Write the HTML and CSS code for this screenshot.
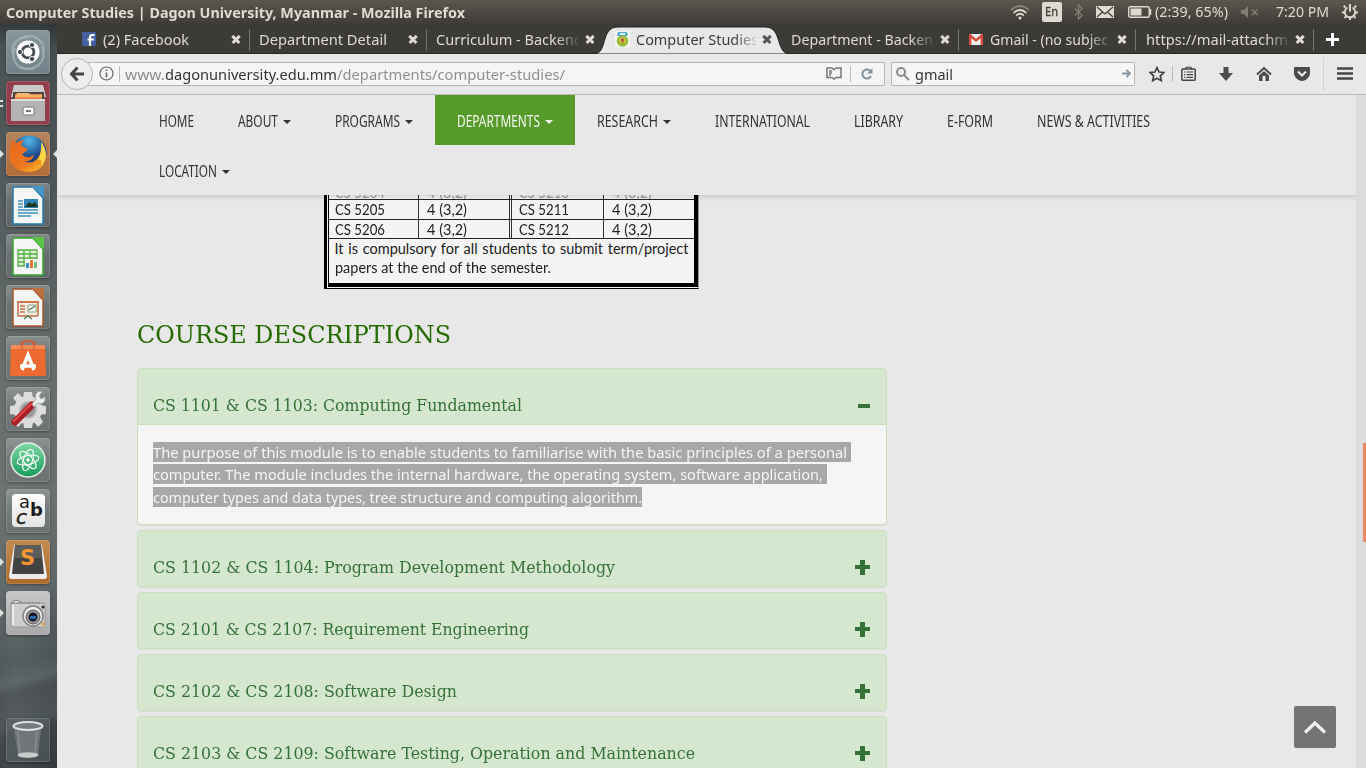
FILE: index.html
```html
<!DOCTYPE html>
<html lang="en">
<head>
<meta charset="utf-8">
<title>Computer Studies | Dagon University, Myanmar</title>
<link rel="stylesheet" href="styles.css">
</head>
<body>
<header class="panel">
  <span class="panel-title" data-w="459">Computer Studies | Dagon University, Myanmar - Mozilla Firefox</span>
  <div class="status">
    <svg class="st-wifi" width="20" height="16" viewBox="0 0 20 16" fill="none" stroke-width="1.7"><path d="M1 6Q10-2 19 6" stroke="#85817a"/><path d="M3.5 9Q10 3 16.500 9M6.200 11.500Q10 8 13.800 11.500" stroke="#dfdbd2"/><circle cx="10" cy="14" r="1.500" fill="#dfdbd2"/></svg>
    <span class="lang"><span data-w="13">En</span></span>
    <svg class="st-bt" width="9" height="16" viewBox="0 0 9 16" fill="none" stroke="#817d75" stroke-width="1.300"><path d="M1 4.500L8 11.500L4.500 15V1L8 4.500L1 11.500"/></svg>
    <svg class="st-mail" width="18" height="12" viewBox="0 0 18 12"><rect width="18" height="12" fill="#dfdbd2"/><path d="M1 1L9 8L17 1M1 11L6.500 6M17 11L11.500 6" fill="none" stroke="#45423c" stroke-width="1.300"/></svg>
    <svg class="st-batt" width="24" height="12" viewBox="0 0 24 12"><rect x=".7" y=".7" width="20.500" height="10.600" rx="1.500" fill="none" stroke="#dfdbd2" stroke-width="1.400"/><rect x="2.500" y="2.500" width="11" height="7" fill="#dfdbd2"/><path d="M22.500 3v6" stroke="#dfdbd2" stroke-width="1.500"/></svg>
    <span class="st-time" data-w="73">(2:39, 65%)</span>
    <svg class="st-mute" width="18" height="12" viewBox="0 0 18 12"><path d="M0 4H3L7 0V12L3 8H0Z" fill="#817d75"/><path d="M11 3.500L16.500 9M16.500 3.500L11 9" stroke="#817d75" stroke-width="1.500"/></svg>
    <span class="st-clock" data-w="53">7:20 PM</span>
    <svg class="st-gear" width="16" height="16" viewBox="0 0 16 16" fill="none" stroke="#dfdbd2"><path d="M5.500 3.500A5.200 5.200 0 1 0 10.500 3.500" stroke-width="1.800"/><path d="M8 0V7.500" stroke-width="2"/><path d="M3.500 3.500L1.800 1.800M12.500 3.500L14.200 1.800M2.500 8.500H0M13.500 8.500H16M4 12.500L2.500 14M12 12.500L13.500 14M8 13.500V16" stroke-width="2"/></svg>
  </div>
</header>
<div class="desktop">
<nav class="launcher">
  <div class="tile dash"><svg viewBox="0 0 44 44"><g fill="none" stroke="#bdc7cb" stroke-width="2" opacity=".55"><path d="M8 27C2 13 16 3 29 7M15 9C29 1 41 13 37 25M36 17C42 32 28 43 14 37M29 38C14 43 3 31 9 18"/></g><circle cx="22" cy="22" r="11.500" fill="#fafafa"/><circle cx="22" cy="22" r="5.900" fill="none" stroke="#454c52" stroke-width="2.800"/><g fill="#454c52" stroke="#fafafa"><circle cx="14" cy="22" r="2.600"/><circle cx="26" cy="15" r="2.600"/><circle cx="26" cy="29" r="2.600"/></g></svg></div>
  <div class="tile files"><span class="pip two"></span><svg viewBox="0 0 44 44"><path d="M8 4H37L40 16H5Z" fill="#c9c9c9"/><path d="M7 11H38V19H7Z" fill="#4d443f"/><path d="M9 13H36V19H9Z" fill="#e58b48"/><path d="M11 12H23L25 14H36V16H9Z" fill="#f4b46e"/><path d="M5 18H39V40H5Z" fill="#b4b4b4"/><path d="M5 18H39V20H5Z" fill="#ddd"/><rect x="17" y="26" width="11" height="8" rx="1" fill="#f7f7f7" stroke="#777"/><rect x="20" y="29" width="5" height="2" fill="#777"/></svg></div>
  <div class="tile fox"><span class="pip"></span><span class="pip right"></span><svg viewBox="0 0 44 44"><defs><radialGradient id="globe" cx=".5" cy=".15"><stop stop-color="#52b9eb"/><stop offset="1" stop-color="#173f81"/></radialGradient><linearGradient id="fur" x2=".8" y2="1"><stop stop-color="#e66a1f"/><stop offset=".65" stop-color="#ed751e"/><stop offset="1" stop-color="#f8b928"/></linearGradient></defs><circle cx="23" cy="21" r="17.500" fill="url(#globe)"/><path d="M7 8L10 11Q14 8 18 8Q15 11 15.500 14L22 17Q20 20 16 22Q19 26 24 25L28 23Q26 30 19 29Q25 33 31 27Q35 22 35 17Q41 18 40 25C38 45 6 45 4 25Q3 15 7 8Z" fill="url(#fur)"/><path d="M35 10C42 18 41 28 35 34Q37 26 32 28Q36 20 35 10Z" fill="#fbd74a"/></svg></div>
  <div class="tile"><svg viewBox="0 0 44 44"><path d="M7 4H27L37 15V41H7Z" fill="#f6f6f6" stroke="#237bab" stroke-width="1.500"/><path d="M26 3H38V15Z" fill="#4797c6"/><rect x="18" y="16" width="14" height="9" fill="#2e87b6"/><path d="M19 24L23 19L26 21L29 19L32 24Z" fill="#23391f"/><path d="M12 18H17M12 21H17M12 24H17M12 27H32M12 30H32M12 33H25" stroke="#4191bf" stroke-width="1.500"/></svg></div>
  <div class="tile"><svg viewBox="0 0 44 44"><path d="M7 4H27L37 15V41H7Z" fill="#f6f6f6" stroke="#35a72e" stroke-width="1.500"/><path d="M26 3H38V15Z" fill="#5bc447"/><path d="M12 16H31V32H12ZM12 20H31M12 24H31M12 28H31M18 16V32M24 16V32" fill="#e4f2dd" stroke="#52ae40" stroke-width="1.300"/><rect x="19" y="25" width="13" height="9" fill="#f9f9f9"/><path d="M20 29h3v5h-3Z" fill="#3d8ebd"/><path d="M24 26h3v8h-3Z" fill="#df793c"/><path d="M28 28h3v6h-3Z" fill="#7aba75"/></svg></div>
  <div class="tile"><svg viewBox="0 0 44 44"><path d="M7 4H27L37 15V41H7Z" fill="#f6f6f6" stroke="#a5572b" stroke-width="1.500"/><path d="M26 3H38V15Z" fill="#bd6f42"/><rect x="12" y="17" width="20" height="14" rx="1" fill="#f7eee8" stroke="#c26b3e" stroke-width="1.500"/><path d="M11 17H33M14 21H19M14 24H19M14 27H19" stroke="#cc7045" stroke-width="1.700"/><path d="M22 20H30V27H22Z" fill="#fff" stroke="#81a172"/><path d="M23 25L26 23L29 21M18 34L22 31L26 34" fill="none" stroke="#4b7449" stroke-width="1.300"/></svg></div>
  <div class="tile"><svg viewBox="0 0 44 44"><path d="M15 14V8Q15 5 22 5Q29 5 29 8V14" fill="none" stroke="#c5583d" stroke-width="2"/><path d="M5 9H39L40 40H4Z" fill="#ed6a31"/><path d="M5 9H39V13H5Z" fill="#f28a59"/><path d="M16 14V9Q16 5 22 5Q28 5 28 9V14" fill="none" stroke="#d4603c" stroke-width="1.500"/><path d="M16 34L22 19L28 34M14 30H30" fill="none" stroke="#fff" stroke-width="3.500"/></svg></div>
  <div class="tile"><svg viewBox="0 0 44 44"><g fill="#dcdcdc"><circle cx="22" cy="23" r="14"/><path d="M18 5H26L27 12H17ZM18 41H26L27 34H17ZM4 19V27L11 28V18ZM40 19V27L33 28V18ZM7 11L12 6L18 12L12 17ZM37 35L32 40L27 34L33 28ZM7 35L12 40L18 34L12 28Z"/></g><circle cx="22" cy="23" r="8" fill="#939896" stroke="#bababa" stroke-width="2"/><path d="M9 35L26 18" stroke="#a92024" stroke-width="7" stroke-linecap="round"/><path d="M8 34L25 17" stroke="#e4484a" stroke-width="2" stroke-linecap="round"/><path d="M26 17L30 12C28 7 32 3 36 5L33 9L35 12L39 10C40 15 36 18 32 16L28 20Z" fill="#eee" stroke="#a8a8a8"/></svg></div>
  <div class="tile"><svg viewBox="0 0 44 44"><defs><linearGradient id="atom" x2="0" y2="1"><stop stop-color="#7fd9a4"/><stop offset="1" stop-color="#159b5b"/></linearGradient></defs><circle cx="22" cy="22" r="17" fill="url(#atom)" stroke="#e8eee9" stroke-width="1.500"/><g fill="none" stroke="#f3fff7" stroke-width="1.200"><ellipse cx="22" cy="22" rx="11" ry="4.500" transform="rotate(-12 22 22)"/><ellipse cx="22" cy="22" rx="11" ry="4.500" transform="rotate(48 22 22)"/><ellipse cx="22" cy="22" rx="11" ry="4.500" transform="rotate(108 22 22)"/></g><circle cx="22" cy="22" r="1.700" fill="#fff"/></svg></div>
  <div class="tile"><div class="letters"><span class="la">a</span><span class="lb">b</span><span class="lc">c</span></div></div>
  <div class="tile sublime"><span class="pip"></span><svg viewBox="0 0 44 44"><path d="M8 5H36L41 36Q41 39 38 39H6Q3 39 3 36Z" fill="#ececec"/><path d="M9 5H35L38 34H6Z" fill="#434343"/><path d="M9 5H35L36 18H8Z" fill="#5c5c5c"/></svg><span class="ls">S</span></div>
  <div class="tile camera"><span class="pip"></span><svg viewBox="0 0 44 44"><rect x="5" y="12" width="34" height="24" rx="2" fill="#cfcfcf" stroke="#969696"/><path d="M5 12Q10 7 16 12Z" fill="#f5f5f5" stroke="#777"/><path d="M17 12H34" stroke="#777" stroke-dasharray="2 1"/><path d="M7 14V34" stroke="#eee" stroke-width="2"/><circle cx="27" cy="25" r="10" fill="#eee" stroke="#818181" stroke-width="1.500"/><circle cx="27" cy="26" r="7" fill="#9a9a9a" stroke="#555"/><circle cx="27" cy="26" r="4.500" fill="#151b2a"/><path d="M24 25H30V28H24Z" fill="#2c67a5"/><circle cx="37" cy="16" r="1.500" fill="#222"/><circle cx="37" cy="33" r="1.500" fill="#f49c21"/></svg></div>
  <div class="tile trash"><svg viewBox="0 0 44 44"><path d="M8 10H35L32 38Q22 42 12 38Z" fill="#7b8083" opacity=".75"/><path d="M12 13L14 36M31 13L29 36" stroke="#acb1b3" opacity=".6"/><ellipse cx="22" cy="8" rx="14.500" ry="4" fill="#777c7e" stroke="#dedfdd" stroke-width="2"/><ellipse cx="22" cy="37" rx="10.500" ry="2.700" fill="#c8cbca"/></svg></div>
</nav>
<main class="window">
  <div class="tabs">
    <div class="tab t1"><svg width="14" height="14" viewBox="0 0 14 14"><rect width="14" height="14" rx="1" fill="#4460a0"/><path d="M8 14V5.500Q8 3 10.500 3H12.500M5.500 7.500H12" fill="none" stroke="#fff" stroke-width="2.200"/></svg><span class="name"><span data-w="86">(2) Facebook</span></span><i class="x"></i></div>
    <div class="tab"><span class="name"><span data-w="128">Department Detail</span></span><i class="x"></i></div>
    <div class="tab last"><span class="name fade"><span data-w="147">Curriculum - Backend</span></span><i class="x"></i></div>
    <div class="tab active"><svg class="shape" width="196" height="29" viewBox="0 0 196 29"><path d="M0 29C14 29 6 2 24 2H171C189 2 181 29 196 29Z" transform="translate(0 -1)" fill="#e8e8e8" stroke="#24231f" stroke-width="1"/><path d="M0 28H196V29H0Z" fill="#e8e8e8"/></svg><svg width="15" height="16" viewBox="0 0 15 16"><rect width="15" height="16" fill="#f5f5ef"/><path d="M3 1H12L13 5H2Z" fill="#55a9c9"/><path d="M5 2H10V4H5Z" fill="#d8eef2"/><ellipse cx="7.500" cy="10" rx="5.800" ry="5.600" fill="#91be36"/><circle cx="7.500" cy="9.500" r="3.200" fill="#d7bd4f"/><path d="M7.500 7.500V12.500M6 9H9" stroke="#a45032" stroke-width="1.500"/></svg><span class="name fade"><span data-w="122">Computer Studies</span></span><i class="x"></i></div>
    <div class="tab"><span class="name fade"><span data-w="142">Department - Backen</span></span><i class="x"></i></div>
    <div class="tab gm"><svg width="14" height="11" viewBox="0 0 14 11"><rect width="14" height="11" rx="1" fill="#eee"/><path d="M1.200 11V1.500L7 6.500L12.800 1.500V11" fill="none" stroke="#d94b3d" stroke-width="2.400"/></svg><span class="name fade"><span data-w="118">Gmail - (no subjec</span></span><i class="x"></i></div>
    <div class="tab t7"><span class="name fade"><span data-w="142">https://mail-attachm</span></span><i class="x"></i></div>
    <i class="plus-tab"></i>
  </div>
  <div class="toolbar">
    <div class="back"><svg width="16" height="16" viewBox="0 0 16 16" fill="none" stroke="#454545" stroke-width="3"><path d="M8.500 1.500L2.500 8L8.500 14.500M3 8H15"/></svg></div>
    <div class="url">
      <svg width="15" height="15" viewBox="0 0 15 15"><circle cx="7.500" cy="7.500" r="6.500" fill="none" stroke="#666" stroke-width="1.200"/><path d="M7.500 3.500V5M7.500 6.500V11.500" stroke="#666" stroke-width="1.600"/></svg>
      <i class="vr"></i>
      <span class="address"><span data-w="40">www.</span><b data-w="172">dagonuniversity.edu.mm</b><span data-w="228">/departments/computer-studies/</span></span>
      <svg class="reader" width="16" height="13" viewBox="0 0 16 13" fill="none" stroke="#777" stroke-width="1.500"><path d="M1 1H6L8 2.500L10 1H15V10.500H10L8 12L6 10.500H1ZM3 4H6M3 6H6M3 8H5"/></svg>
      <i class="vr"></i>
      <svg class="reload" width="12" height="12" viewBox="0 0 12 12"><path d="M10 8A4.500 4.500 0 1 1 9 2.800" fill="none" stroke="#84919d" stroke-width="2"/><path d="M11.500 0V5.500H6Z" fill="#84919d"/></svg>
    </div>
    <div class="search"><svg width="14" height="14" viewBox="0 0 14 14" fill="none" stroke="#8a8a8a" stroke-width="2"><circle cx="5" cy="5" r="4"/><path d="M8 8L13 13"/></svg><span data-w="38">gmail</span><svg class="go" width="9" height="9" viewBox="0 0 9 9" fill="none" stroke="#8796a5" stroke-width="1.800"><path d="M0 4.500H8M4.500 1L8 4.500L4.500 8"/></svg></div>
    <div class="tools">
      <svg width="16" height="16" viewBox="0 0 16 16"><path d="M8 1.500L10 6L15 6.500L11.300 9.900L12.300 14.700L8 12.200L3.700 14.700L4.700 9.900L1 6.500L6 6Z" fill="none" stroke="#454545" stroke-width="1.700"/></svg><i class="vr"></i>
      <svg class="list" width="15" height="15" viewBox="0 0 15 15" fill="none" stroke="#454545" stroke-width="1.500"><rect x=".8" y="3" width="13.400" height="11.200" rx="1"/><path d="M4 3Q4.500 1 7.500 1Q10.500 1 11 3M5.500 6H12M5.500 8.700H12M5.500 11.400H12M3 6H4.300M3 8.700H4.300M3 11.400H4.300" stroke-width="1.200"/></svg>
      <svg class="down" width="14" height="14" viewBox="0 0 14 14"><path d="M4.500 0H9.500V6H14L7 14L0 6H4.500Z" fill="#4b4b4b"/></svg>
      <svg class="home" width="16" height="15" viewBox="0 0 16 15"><path d="M1 8.500L8 2L15 8.500" fill="none" stroke="#4b4b4b" stroke-width="2"/><path d="M3 9.500L8 5L13 9.500V15H9.500V10H6.500V15H3Z" fill="#4b4b4b"/></svg>
      <svg class="pocket" width="16" height="14" viewBox="0 0 16 14"><path d="M1 0H15Q16 0 16 1V6C16 10 12 14 8 14C4 14 0 10 0 6V1Q0 0 1 0Z" fill="#4b4b4b"/><path d="M4 4.500L8 8.500L12 4.500" fill="none" stroke="#eee" stroke-width="2"/></svg>
      <i class="vr tall"></i>
      <svg class="menu" width="16" height="13" viewBox="0 0 16 13"><path d="M0 1.500H16M0 6.500H16M0 11.500H16" stroke="#454545" stroke-width="2.600"/></svg>
    </div>
  </div>
  <div class="page">
    <ul class="site-nav">
      <li><span data-w="35">HOME</span></li>
      <li><span data-w="40">ABOUT</span><i class="caret"></i></li>
      <li><span data-w="65">PROGRAMS</span><i class="caret"></i></li>
      <li class="current"><span data-w="83">DEPARTMENTS</span><i class="caret"></i></li>
      <li><span data-w="61">RESEARCH</span><i class="caret"></i></li>
      <li><span data-w="95">INTERNATIONAL</span></li>
      <li><span data-w="49">LIBRARY</span></li>
      <li><span data-w="46">E-FORM</span></li>
      <li><span data-w="113">NEWS &amp; ACTIVITIES</span></li>
      <li><span data-w="58">LOCATION</span><i class="caret"></i></li>
    </ul>
    <div class="content">
      <div class="sheet"><div class="sheet-in">
        <div class="row cut"><span><b data-w="50">CS 5204</b></span><span><b data-w="40">4 (3,2)</b></span><span><b data-w="50">CS 5210</b></span><span><b data-w="40">4 (3,2)</b></span></div>
        <div class="row"><span><b data-w="50">CS 5205</b></span><span><b data-w="40">4 (3,2)</b></span><span><b data-w="50">CS 5211</b></span><span><b data-w="40">4 (3,2)</b></span></div>
        <div class="row"><span><b data-w="50">CS 5206</b></span><span><b data-w="40">4 (3,2)</b></span><span><b data-w="50">CS 5212</b></span><span><b data-w="40">4 (3,2)</b></span></div>
        <div class="note"><div class="wide">It is compulsory for all students to submit term/project</div><div><b data-w="216">papers at the end of the semester.</b></div></div>
      </div></div>
      <h2><span data-w="314">COURSE DESCRIPTIONS</span></h2>
      <div class="accordion">
        <section><h4><span data-w="369">CS 1101 &amp; CS 1103: Computing Fundamental</span><i class="minus"></i></h4>
          <div class="body"><p><mark><span data-w="694">The purpose of this module is to enable students to familiarise with the basic principles of a personal</span></mark></p><p><mark><span data-w="670">computer. The module includes the internal hardware, the operating system, software application,</span></mark></p><p><mark class="end"><span data-w="489">computer types and data types, tree structure and computing algorithm.</span></mark></p></div></section>
        <section><h4><span data-w="462">CS 1102 &amp; CS 1104: Program Development Methodology</span><i class="plus"></i></h4></section>
        <section><h4><span data-w="376">CS 2101 &amp; CS 2107: Requirement Engineering</span><i class="plus"></i></h4></section>
        <section><h4><span data-w="304">CS 2102 &amp; CS 2108: Software Design</span><i class="plus"></i></h4></section>
        <section><h4><span data-w="542">CS 2103 &amp; CS 2109: Software Testing, Operation and Maintenance</span><i class="plus"></i></h4></section>
      </div>
    </div>
    <div class="scroll"><i></i></div>
    <div class="top-btn"><svg width="24" height="14" viewBox="0 0 24 14"><path d="M2 12.500L12 3L22 12.500" fill="none" stroke="#f1f1f1" stroke-width="3.200"/></svg></div>
  </div>
</main>
</div>
<script src="fit.js"></script>
</body>
</html>
```
FILE: styles.css
```css
* { box-sizing: border-box; }
body { margin: 0; width: 1366px; height: 768px; overflow: hidden; font: 14.5px "Noto Sans", sans-serif; background: #e8e8e8; }
svg { display: block; flex: none; }
[data-w] { display: inline-block; white-space: pre; transform-origin: 0 50%; flex: none; }
b { font-weight: 400; }

.panel { height: 24px; display: flex; align-items: center; padding: 0 8px 0 6px; background: linear-gradient(#5b574e, #3e3c38); color: #dfdbd2; line-height: 24px; }
.panel-title { font-weight: 700; font-size: 14.5px; }
.status { display: flex; align-items: center; height: 24px; margin-left: auto; font-size: 14.5px; }
.st-time, .st-clock { position: relative; top: -1px; }
.lang { width: 20px; height: 20px; margin: 0 12px; background: #dfdbd2; border-radius: 2px; color: #44413b; font-size: 12.5px; line-height: 20px; padding-left: 3px; -webkit-text-stroke: .3px #44413b; }
.st-mail { margin-left: 13px; }
.st-batt { margin: 0 3px 0 14px; }
.st-mute { margin: 0 17px 0 13px; }
.st-gear { margin-left: 13px; }

.desktop { display: flex; height: 744px; }
.launcher { width: 57px; display: flex; flex-direction: column; gap: 7px; padding: 6px 0 0 6px; background: radial-gradient(ellipse at 15px 640px, rgba(125,133,130,.35), transparent 65px), linear-gradient(165deg, transparent 620px, rgba(120,130,130,.3) 640px, transparent 650px, rgba(120,130,130,.2) 680px, transparent 690px), linear-gradient(#2d3335, #434b4e 24px, #4b5356 180px, #626967 350px, #666d6c 480px, #596164 560px, #42494d 640px, #272d33); }
.tile { position: relative; width: 44px; height: 44px; flex: none; border-radius: 4px; background: linear-gradient(rgba(190,196,196,.42), rgba(130,137,138,.38) 45%, rgba(110,115,115,.4)); box-shadow: inset 0 0 0 1px rgba(205,210,210,.22), 0 1px 3px rgba(0,0,0,.35); }
.tile svg { width: 44px; height: 44px; }
.dash { background: linear-gradient(#89969b, #71828a); }
.files { background: #933e4b; }
.fox { background: linear-gradient(#b6835e, #b36c37); }
.sublime { background: linear-gradient(#c18a4e, #ad6b27); }
.camera { background: linear-gradient(#c8c8c8, #a9a9a9); }
.trash { margin-top: 76px; background: rgba(110,118,122,.3); }
.pip { position: absolute; left: -6px; top: 18px; border: 4px solid transparent; border-left-color: #dedede; border-right: 0; }
.pip.right { left: 47px; border-left: 0; border-right: 4px solid #dedede; }
.pip.two { border: 0; width: 3px; height: 7px; top: 19px; border-top: 2px solid #ddd; border-bottom: 2px solid #ddd; }
.letters { position: absolute; left: 6px; top: 5px; width: 33px; height: 33px; border-radius: 4px; background: linear-gradient(#fff, #e3e3e3); color: #1c1c1c; font-family: "DejaVu Sans", sans-serif; }
.letters span { position: absolute; line-height: 16px; font-size: 18px; }
.letters .la { left: 7px; top: 0; }
.letters .lb { left: 18px; top: 8px; font-weight: 700; }
.letters .lc { left: 4px; top: 15px; font-style: italic; font-size: 20px; -webkit-text-stroke: .4px #1c1c1c; }
.ls { position: absolute; left: 14px; top: 4px; font: 700 21px/28px "DejaVu Sans", sans-serif; color: #f59431; }

.window { flex: 1; min-width: 0; }
.tabs { height: 30px; display: flex; background: #3c3b37; color: #dfdbd2; border-bottom: 1px solid #282723; }
.tab { position: relative; width: 177px; flex: none; display: flex; align-items: center; padding: 0 10px 0 9px; height: 30px; }
.tab::after { content: ""; position: absolute; right: 0; top: 5px; height: 22px; width: 1px; background: #75736d; }
.tab.last::after, .tab.active::after { display: none; }
.t1 { width: 193px; padding-left: 25px; }
.t1 .name, .gm .name { margin-left: 7px; }
.gm { padding-left: 10px; }
.t7 { width: 178px; padding-left: 10px; }
.name { flex: 1; min-width: 0; overflow: hidden; line-height: 30px; margin-right: 7px; }
.fade { -webkit-mask-image: linear-gradient(90deg, #000 calc(100% - 22px), rgba(0,0,0,.15)); }
.tab.active { width: 178px; padding: 0 11px; color: #3c3c3c; z-index: 1; }
.active .name { margin-left: 6px; margin-right: 6px; }
.active > svg { position: relative; }
.active > .shape { position: absolute; left: -10px; top: 2px; height: 29px; }
.x { position: relative; flex: none; width: 9px; height: 9px; }
.x::before, .x::after { content: ""; position: absolute; left: -.5px; top: 3.3px; width: 10px; height: 2.5px; background: #dfdbd2; transform: rotate(45deg); }
.x::after { transform: rotate(-45deg); }
.active .x::before, .active .x::after { background: #555; }
.plus-tab { width: 13px; height: 13px; margin: 9px 0 0 12px; background: linear-gradient(#fff, #fff) 50% 50%/13px 3px no-repeat, linear-gradient(#fff, #fff) 50% 50%/3px 13px no-repeat; }

.toolbar { height: 41px; display: flex; align-items: center; padding: 0 13px 1px 4px; background: #e8e8e8; border-bottom: 1px solid #bdb8b4; }
.back { width: 32px; height: 32px; border: 1px solid #b9b5b2; border-radius: 50%; background: #ededed; display: grid; place-items: center; z-index: 1; margin-right: -6px; }
.url, .search { height: 24px; border: 1px solid #b9b5b2; border-radius: 2px; background: #f5f5f5; display: flex; align-items: center; }
.url { width: 798px; padding: 0 11px 0 11px; color: #8f8f8f; }
.vr { width: 1px; height: 16px; background: #bbb; }
.url .vr { margin: 0 5px 0 5px; }
.address { display: flex; line-height: 22px; flex: 1; font-size: 15px; }
.address b { color: #333; }
.url .reader + .vr { margin: 0 10px 0 8px; }
.search { width: 244px; margin-left: 6px; padding: 0 3px 0 4px; color: #333; font-size: 15px; }
.search span { margin-left: 5px; line-height: 22px; }
.go { margin-left: auto; }
.tools { display: flex; align-items: center; flex: 1; margin-left: 14px; height: 40px; }
.tools .vr { margin-left: 7px; }
.tools .list { margin-left: 8px; }
.tools .down { margin-left: 23px; }
.tools .home { margin-left: 23px; }
.tools .pocket { margin-left: 22px; }
.tools .tall { height: 34px; margin-left: 13px; background: #d2d2d2; }
.tools .menu { margin-left: auto; }

.page { position: relative; height: 673px; background: #e8e8e8; overflow: hidden; }
.site-nav { position: relative; z-index: 1; list-style: none; margin: 0; height: 100px; padding: 0 120px 0 80px; display: flex; flex-wrap: wrap; background: #e8e8e8; box-shadow: 0 2px 5px rgba(0,0,0,.14); font-size: 15.5px; color: #333; }
.site-nav li { display: flex; align-items: center; height: 50px; padding: 0 22px; line-height: 50px; }
.site-nav li span { padding-top: 1px; }
.site-nav .current { background: #569b29; color: #f3f7ef; }
.caret { margin: 3px 0 0 5px; border: 4px solid transparent; border-top-color: currentColor; border-bottom: 0; }
.content { width: 750px; margin-left: 80px; }
.sheet { width: 375px; margin-left: 187px; background: #f4f4f4; border: solid #000; border-width: 0 1px 1px 3px; border-right-color: #999; padding: 0 0 1px 1px; height: 94px; }
.sheet-in { height: 92px; border: solid #000; border-width: 0 4px 4px 1px; font: 14.5px/18px Lato, sans-serif; color: #222; }
.row { display: grid; grid-template-columns: 90px 93px 92px 1fr; height: 19.5px; border-bottom: 1px solid #222; }
.row span { padding-left: 8px; border-right: 1px solid #333; overflow: hidden; height: 100%; line-height: 20px; }
.row span:first-child { padding-left: 5.5px; }
.row span:nth-child(2) { border-right: 3px double #333; }
.row span:nth-child(3) { padding-left: 7px; }
.row span:last-child { border-right: 0; }
.row.cut { height: 5px; }
.row.cut span { line-height: 0; }
.row.cut b { position: relative; top: -11px; line-height: 18px; color: #999; }
.note { padding: 0 5.5px; line-height: 19px; }
.wide { width: 354px; text-align: justify; text-align-last: justify; white-space: nowrap; }
h2 { margin: 29px 0 0; height: 50px; font: 24px/34px "DejaVu Serif", serif; color: #246b00; }
.accordion { display: flex; flex-direction: column; gap: 5px; }
section { border: 1px solid #c9e2b8; border-radius: 4px; background: #d5e7cf; box-shadow: 0 1px 1px rgba(0,0,0,.06); overflow: hidden; flex: none; }
h4 { margin: 0; height: 55px; padding: 19px 16px 0 15px; display: flex; justify-content: space-between; align-items: center; font: 16px/20px "DejaVu Serif", serif; color: #357238; }
.plus { position: relative; top: -1px; width: 15px; height: 15px; background: linear-gradient(#357238, #357238) 50% 50%/15px 4px no-repeat, linear-gradient(#357238, #357238) 50% 50%/5px 15px no-repeat; }
.minus { width: 12px; height: 4px; background: #357238; margin-top: -1px; }
.body { height: 100px; border-top: 1px solid #c9e2b8; background: #f5f5f5; padding: 17px 15px; font-size: 15.3px; }
.body p { margin: 0; height: 22px; display: flex; }
.body p:nth-child(2) { height: 23px; }
mark { height: 20px; line-height: 20px; background: #a8a8a8; color: #f5f5f5; padding-right: 4px; }
mark.end { padding-right: 0; }
.scroll { position: absolute; right: 0; top: 0; bottom: 0; width: 10px; background: #dcdcdc; z-index: 2; padding: 348px 0 0 7px; }
.scroll i { display: block; height: 99px; background: #e98a65; }
.top-btn { position: absolute; right: 30px; bottom: 20px; width: 42px; height: 42px; border-radius: 2px; background: #747474; display: grid; place-items: center; }
```
FILE: fit.js
```js
// Scales each label horizontally so that it fills its nominal width.
document.querySelectorAll("[data-w]").forEach(function (el) {
  var natural = el.getBoundingClientRect().width;
  var wanted = Number(el.dataset.w);
  el.style.transform = "scaleX(" + wanted / natural + ")";
  el.style.marginRight = wanted - natural + "px";
});
```
